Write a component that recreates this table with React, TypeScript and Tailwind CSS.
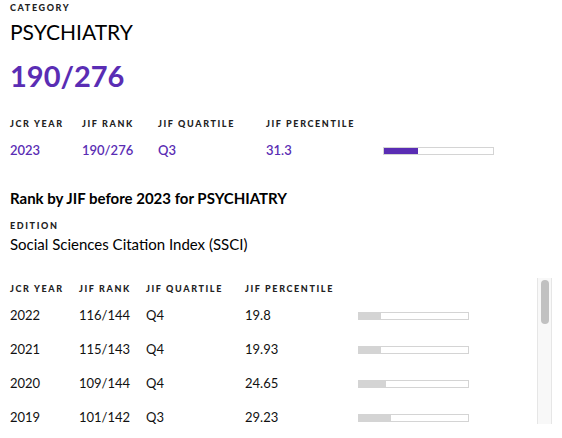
import { Fragment } from 'react';

const current = { year: '2023', rank: '190/276', quartile: 'Q3', percentile: 31.3 };

const history = [
  { year: '2022', rank: '116/144', quartile: 'Q4', percentile: 19.8 },
  { year: '2021', rank: '115/143', quartile: 'Q4', percentile: 19.93 },
  { year: '2020', rank: '109/144', quartile: 'Q4', percentile: 24.65 },
  { year: '2019', rank: '101/142', quartile: 'Q3', percentile: 29.23 },
];

function Label({ children }: { children: React.ReactNode }) {
  return (
    <div className="text-[9px] font-black tracking-[0.18em] uppercase text-[#222] leading-none">
      {children}
    </div>
  );
}

function Bar({ pct, fill }: { pct: number; fill: string }) {
  return (
    <div className="w-[111px] h-[8px] border border-[#d4d4d4] bg-white">
      <div className={`h-full ${fill}`} style={{ width: `${pct}%` }} />
    </div>
  );
}

export default function App() {
  return (
    <div className="w-[562px] h-[438px] overflow-hidden bg-white text-[#111] font-['Lato',sans-serif]">
      <div className="pl-[10px] pt-[3px]">
        <Label>Category</Label>
        <div className="text-[21px] leading-none mt-[9px] text-black">PSYCHIATRY</div>
        <div className="text-[29px] font-bold leading-none mt-[19px] text-[#5a2db4]">190/276</div>

        <div className="grid grid-cols-[72px_76px_108px_117px_auto] mt-[29px] items-center">
          <Label>JCR Year</Label>
          <Label>JIF Rank</Label>
          <Label>JIF Quartile</Label>
          <Label>JIF Percentile</Label>
          <div />
          <div className="text-[13px] font-semibold text-[#5a2db4] mt-[13px]">{current.year}</div>
          <div className="text-[13px] font-semibold text-[#5a2db4] mt-[13px]">{current.rank}</div>
          <div className="text-[13px] font-semibold text-[#5a2db4] mt-[13px]">{current.quartile}</div>
          <div className="text-[13px] font-semibold text-[#5a2db4] mt-[13px]">{current.percentile}</div>
          <div className="mt-[13px]">
            <Bar pct={current.percentile} fill="bg-[#5a2db4]" />
          </div>
        </div>

        <div className="text-[15px] font-bold text-black mt-[30px] leading-none">
          Rank by JIF before 2023 for PSYCHIATRY
        </div>
        <div className="mt-[15px]">
          <Label>Edition</Label>
        </div>
        <div className="text-[15px] leading-none mt-[7px] text-black">Social Sciences Citation Index (SSCI)</div>
      </div>

      <div className="flex mt-[26px] h-[146px]">
        <div className="flex-1 overflow-hidden pl-[10px] pt-[6px]">
          <div className="grid grid-cols-[69px_67px_99px_113px_auto] items-center">
            <Label>JCR Year</Label>
            <Label>JIF Rank</Label>
            <Label>JIF Quartile</Label>
            <Label>JIF Percentile</Label>
            <div />
            {history.map((r) => (
              <Fragment key={r.year}>
                <div className="text-[13px] h-[34px] flex items-center pt-[12px]">{r.year}</div>
                <div className="text-[13px] h-[34px] flex items-center pt-[12px]">{r.rank}</div>
                <div className="text-[13px] h-[34px] flex items-center pt-[12px]">{r.quartile}</div>
                <div className="text-[13px] h-[34px] flex items-center pt-[12px]">{r.percentile}</div>
                <div className="h-[34px] flex items-center pt-[12px]">
                  <Bar pct={r.percentile} fill="bg-[#d4d4d4]" />
                </div>
              </Fragment>
            ))}
          </div>
        </div>
        <div className="w-[15px] mr-[10px] bg-[#f8f8f8] border-l border-r border-[#e6e6e6] pt-[2px] flex justify-center">
          <div className="w-[8px] h-[44px] rounded-full bg-[#c1c1c1]" />
        </div>
      </div>
    </div>
  );
}
